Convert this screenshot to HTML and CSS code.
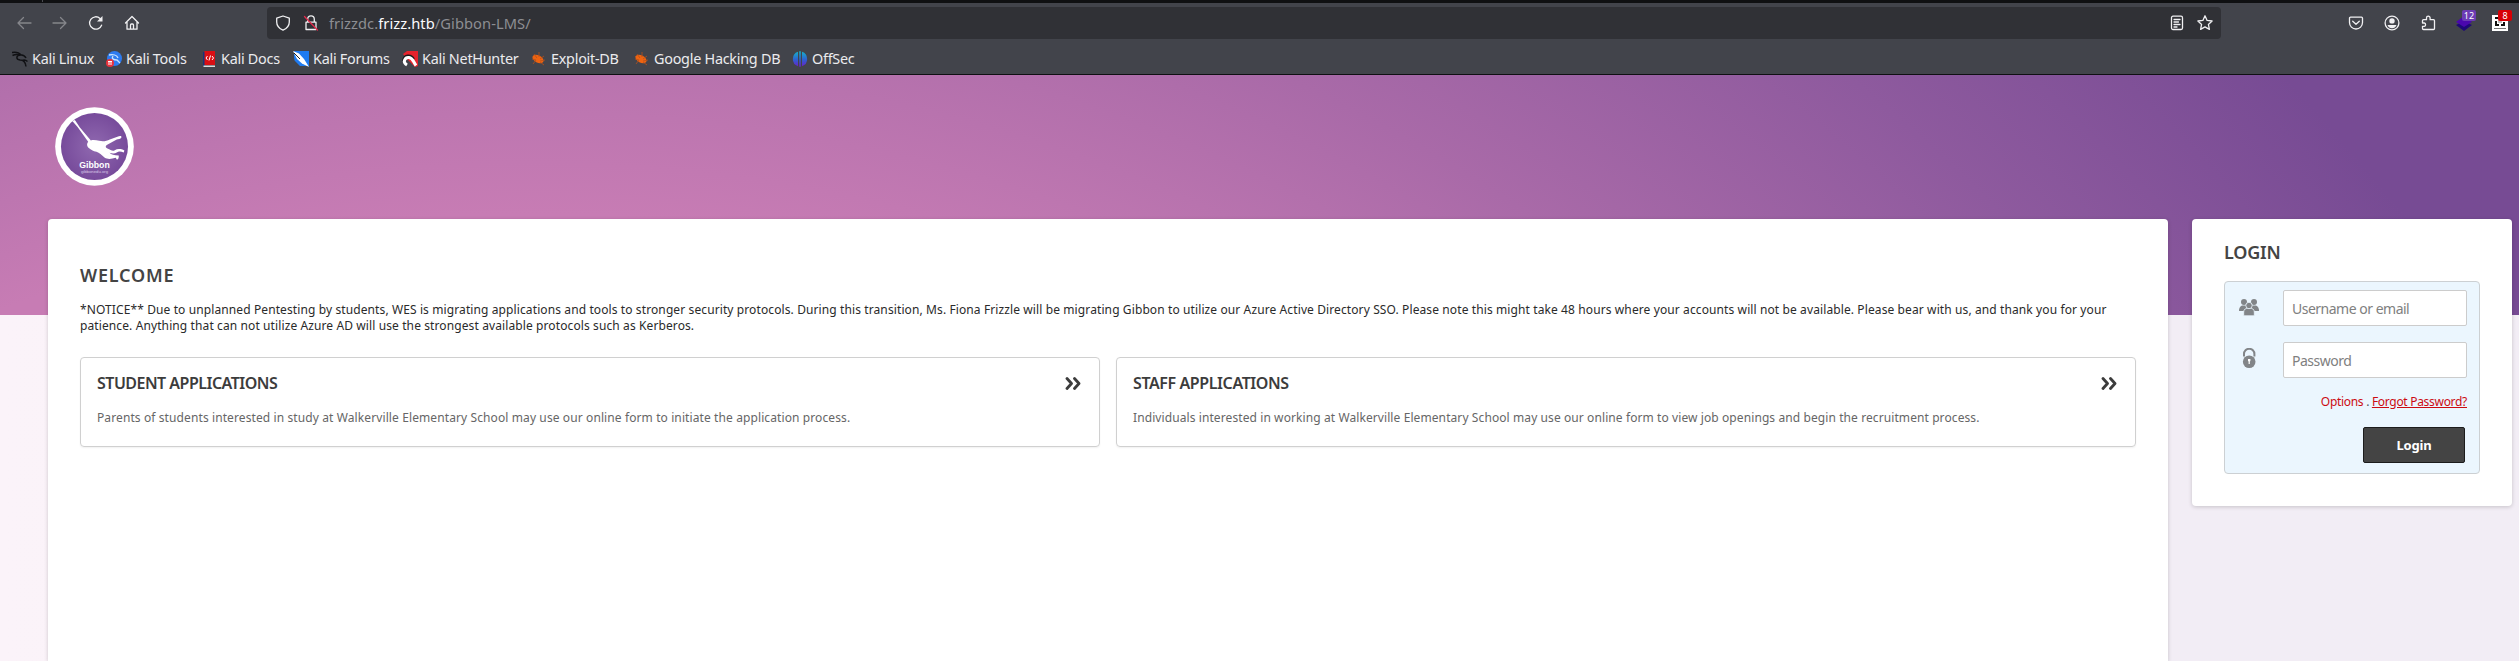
FILE: index.html
```
<!DOCTYPE html>
<html lang="en">
<head>
<meta charset="utf-8">
<title>Gibbon</title>
<link rel="stylesheet" href="styles.css">
</head>
<body>
<div class="tabstrip"><span class="tab-edge"></span></div>
<header class="browser">
  <div class="navbar">
    <svg class="ico dim" viewBox="0 0 16 16"><path d="M15 8H2M7.500 2.500 2 8l5.500 5.500"/></svg>
    <svg class="ico dim" viewBox="0 0 16 16"><path d="M1 8h13M8.500 2.500 14 8l-5.500 5.500"/></svg>
    <svg class="ico" viewBox="0 0 16 16"><path d="M13.600 10.200A6.200 6.200 0 1 1 12 3.400l1.500 1.500"/><path class="fill" d="M14.500 1v5.500H9z"/></svg>
    <svg class="ico" viewBox="0 0 16 16"><path d="M1.500 8 8 1.500 14.500 8M3 7v7.200h10V7M6.500 14V10a1 1 0 0 1 1-1h1a1 1 0 0 1 1 1v4"/></svg>
    <div class="urlbar">
      <svg class="ico" viewBox="0 0 16 16"><path d="M8 1 14.300 3.200V7c0 3.500-2.400 6.500-6.300 8.200C4.100 13.500 1.700 10.500 1.700 7V3.200z"/></svg>
      <svg class="ico" viewBox="0 0 16 16"><path d="M4.700 7V4.200a3.300 3.300 0 0 1 6.600 0V7M3 7.200h10v7.300H3z"/><path class="slash" d="M1.500 1.500 14.500 15"/></svg>
      <div class="url">frizzdc.<b>frizz.htb</b>/Gibbon-LMS/</div>
      <svg class="ico" viewBox="0 0 16 16"><rect x="2.500" y="1.200" width="11" height="13.300" rx="1.500"/><path d="M5 4.500h6M5 7h4.500M5 9.500h6M5 12h3"/></svg>
      <svg class="ico star" viewBox="0 0 16 16"><path d="m8 .8 2.100 4.600 5 .6-3.700 3.400 1 5L8 11.900l-4.400 2.500 1-5L.9 6l5-.6z"/></svg>
    </div>
    <svg class="ico" viewBox="0 0 16 16"><path d="M1.500 3.200a1 1 0 0 1 1-1h11a1 1 0 0 1 1 1V7.500a6.500 6.500 0 0 1-13 0zM4.700 6.300 8 9.300l3.300-3"/></svg>
    <svg class="ico" viewBox="0 0 16 16"><circle cx="8" cy="8" r="6.900"/><circle class="fill" cx="8" cy="5.900" r="2.700"/><path class="fill" d="M3.500 10h9c-.8 2.200-2.500 3.300-4.500 3.300S4.300 12.200 3.500 10z"/></svg>
    <svg class="ico" viewBox="0 0 16 16"><path d="M2.500 8V5.700a1 1 0 0 1 1-1h3V3a1.800 1.800 0 0 1 3.600 0v1.700h3.400a1 1 0 0 1 1 1v7.800a1 1 0 0 1-1 1h-10a1 1 0 0 1-1-1v-2.200h1.800a1.700 1.700 0 0 0 0-3.300z"/></svg>
    <span class="ext">
      <svg class="art" viewBox="0 0 16 16"><path fill="#1e0878" d="m0 10 8-4 8 4-8 6z"/><path fill="#4a07ae" d="m0 7 8-6 8 6-8 5z"/></svg>
      <span class="badge violet">12</span>
    </span>
    <span class="ext">
      <svg class="art" viewBox="0 0 16 16"><path fill="#fff" d="M0 0h16v16H0z"/><path fill="#111" d="M3 2h3v2H3zM3 6h2v3h2v2H3zM11 7h2v4H9V9h2z"/><path fill="#bbb" d="M6 5h4v3H6z"/><path fill="#777" d="M2 13h12v1H2z"/></svg>
      <span class="badge red">8</span>
    </span>
  </div>
  <nav class="bookmarks">
    <a><svg class="art" viewBox="0 0 16 16"><path fill="none" stroke="#101114" stroke-width="1.500" d="M0 1.500c3-.5 7 0 9 2.500M.5 4.500c3-1.500 6-1 8-.5C3.500 4.500 4 8.500 8 9c4 0 5.500 2 6 6.500M8.500 4c3-.5 4.500 1 5.500 3M10 9.500c2-1 4-.5 5.500 1"/></svg>Kali Linux</a>
    <a><svg class="art" viewBox="0 0 16 16"><circle cx="8.500" cy="7.500" r="7.500" fill="#2d7bf0"/><path fill="none" stroke="#c7e2ff" stroke-width="1.300" d="M3 4c4-1 8 0 9 3M7 5c-2 3 1 4 4 4l3 3"/><circle cx="4" cy="12" r="4" fill="#e8323c"/><path stroke="#fff" fill="none" d="M2 10.500h4M3 10.500v3.500M5 10.500v3.500"/></svg>Kali Tools</a>
    <a><svg class="art" viewBox="0 0 16 16"><path fill="#14367c" d="M2 1h2v14H2z"/><path fill="#d90f14" d="M3.500 0H14v14H3.500z"/><path fill="#ddd" d="M2.500 14.500H14V16H2.500z"/><path fill="none" stroke="#fff" d="M6.500 5 5 7l1.500 2M11 5l1.500 2L11 9M9.500 4.500l-1.500 5"/></svg>Kali Docs</a>
    <a><svg class="art" viewBox="0 0 16 16"><path fill="#1f7bf0" d="M1 0h15v15H1z"/><path fill="#42444b" d="M0 2 3 16H0zM2 16 1 9l7 7z"/><path fill="#fff" d="m0 0 6 2.500L11 8l5 8-7-3.500L4 8z"/><path stroke="#222" d="m1 2 6 6"/></svg>Kali Forums</a>
    <a><svg class="art" viewBox="0 0 16 16"><path fill="#e6232c" d="M1 3 5 0h11v15l-3 1L5 8z"/><path fill="none" stroke="#191919" stroke-width="2" d="M1 10c1-7 8-7 11-2"/><path fill="none" stroke="#fff" stroke-width="3" d="M5 14C0 11 3 6 7 6.500c4 .5 4 4 7 8"/></svg>Kali NetHunter</a>
    <a><svg class="art" viewBox="0 0 16 16"><ellipse cx="7" cy="8" rx="6" ry="3.600" transform="rotate(28 7 8)" fill="#ee6310"/><path stroke="#b4501c" stroke-width=".8" fill="none" d="m1 8 4 1-3 4M3 3l3 4M8 1v5M13 5l-4 3M14 9l-5 1M13 14l-4-3"/></svg>Exploit-DB</a>
    <a><svg class="art" viewBox="0 0 16 16"><ellipse cx="7" cy="8" rx="6" ry="3.600" transform="rotate(28 7 8)" fill="#ee6310"/><path stroke="#b4501c" stroke-width=".8" fill="none" d="m1 8 4 1-3 4M3 3l3 4M8 1v5M13 5l-4 3M14 9l-5 1M13 14l-4-3"/></svg>Google Hacking DB</a>
    <a><svg class="art" viewBox="0 0 16 16"><defs><linearGradient id="os" x2="0" y2="1"><stop stop-color="#14b4c8"/><stop offset=".55" stop-color="#2f5fd0"/><stop offset="1" stop-color="#6a1fc8"/></linearGradient></defs><path fill="url(#os)" d="M6 .8v14.400A7.600 7.600 0 0 1 6 .8zM10 .8v14.400A7.600 7.600 0 0 0 10 .8zM7.200.3h1.600v15.400H7.200z"/></svg>OffSec</a>
  </nav>
</header>
<main class="page">
  <svg class="logo" viewBox="0 0 238 238">
    <defs><radialGradient id="lg"><stop stop-color="#9069b0"/><stop offset="1" stop-color="#774b9b"/></radialGradient></defs>
    <circle cx="119" cy="119" r="118.500" fill="#fff"/><circle cx="119" cy="119" r="101" fill="url(#lg)"/>
    <path fill="#fff" d="M52 42 60 39 75 62 108 101C115 98 125 100 133 102 145 105 155 103 165 98L188 90C195 86 202 87 200 92 198 97 190 97 186 98L160 112C152 116 150 121 158 125 168 130 174 134 180 130 188 125 200 126 209 131L207 137C198 134 192 133 186 137 180 141 172 140 164 138 170 144 178 146 192 146 193 152 190 160 186 158L183 153C170 157 158 158 150 153 140 145 134 138 125 135 115 133 108 128 100 122 95 116 96 110 100 105L68 60z"/>
    <text class="logo-name" x="73" y="185" textLength="92" lengthAdjust="spacingAndGlyphs">Gibbon</text>
    <text class="logo-site" x="78" y="199" textLength="82" lengthAdjust="spacingAndGlyphs">gibbonedu.org</text>
  </svg>
  <div class="columns">
    <section class="card content">
      <h2 class="welcome">WELCOME</h2>
      <p class="notice">*NOTICE** Due to unplanned Pentesting by students, WES is migrating applications and tools to stronger security protocols. During this transition, Ms. Fiona Frizzle will be migrating Gibbon to utilize our Azure Active Directory SSO. Please note this might take 48 hours where your accounts will not be available. Please bear with us, and thank you for your patience. Anything that can not utilize Azure AD will use the strongest available protocols such as Kerberos.</p>
      <div class="apps">
        <a class="app">
          <div class="app-head"><h3>STUDENT APPLICATIONS</h3><svg class="chev" viewBox="0 0 17 13"><path d="m2 1.500 4.500 5L2 11.500M9.500 1.500l4.500 5-4.500 5"/></svg></div>
          <p>Parents of students interested in study at Walkerville Elementary School may use our online form to initiate the application process.</p>
        </a>
        <a class="app">
          <div class="app-head"><h3 class="staff">STAFF APPLICATIONS</h3><svg class="chev" viewBox="0 0 17 13"><path d="m2 1.500 4.500 5L2 11.500M9.500 1.500l4.500 5-4.500 5"/></svg></div>
          <p class="snug">Individuals interested in working at Walkerville Elementary School may use our online form to view job openings and begin the recruitment process.</p>
        </a>
      </div>
    </section>
    <aside class="card login">
      <h2>LOGIN</h2>
      <form class="panel">
        <div class="field">
          <svg class="users" viewBox="0 0 20 17"><g fill="#828588"><circle cx="5" cy="3" r="3"/><circle cx="15" cy="3" r="3"/><path d="M0 12c0-4 2-5.500 4-5.500h12c2 0 4 1.500 4 5.500z"/></g><g fill="#828588" stroke="#ebf6fe" stroke-width=".8"><path d="M4.700 16.800V13c0-3 2-3.800 5.300-3.800s5.300.8 5.300 3.800v3.800z"/><circle cx="10" cy="6.500" r="3.200"/></g></svg>
          <input type="text" placeholder="Username or email">
        </div>
        <div class="field">
          <svg class="padlock" viewBox="0 0 20 20"><path fill="none" stroke="#828588" stroke-width="2" d="M5 8.500V6a5.200 5.200 0 0 1 10.400 0v2.500"/><circle cx="10.200" cy="13.700" r="6.300" fill="#828588"/><path fill="#fff" d="M9 11h2.400v2l-.6.500V16H9.600v-2.500L9 13z"/></svg>
          <input type="password" placeholder="Password">
        </div>
        <div class="links"><a>Options</a> . <a class="forgot">Forgot Password?</a></div>
        <button type="button">Login</button>
      </form>
    </aside>
  </div>
</main>
</body>
</html>
```
FILE: styles.css
```
* { box-sizing: border-box; }
html, body { height: 100%; }
body {
  margin: 0;
  display: flex;
  flex-direction: column;
  overflow: hidden;
  font-family: "Noto Sans", sans-serif;
  color: #2a2a2a;
}
h2, h3, p { margin: 0; }
svg { flex: none; display: block; }

.tabstrip { height: 3px; background: #0f1012; padding-left: 42px; flex: none; }
.tab-edge { display: block; width: 1px; height: 2px; background: #4a4b50; }

.browser { height: 72px; flex: none; background: #42444b; border-bottom: 1px solid #0f1012; }
.navbar { display: flex; align-items: center; gap: 20px; padding: 4px 11px 0 16px; height: 36px; }
.ico { width: 16px; height: 16px; fill: none; stroke: #f0f0f2; stroke-width: 1.3; stroke-linejoin: round; stroke-linecap: round; }
.ico .fill { fill: #f0f0f2; stroke: none; }
.ico .slash { stroke: #e2284a; }
.dim { stroke: #85868b; }
.art { width: 16px; height: 16px; }
.urlbar {
  display: flex;
  align-items: center;
  gap: 12px;
  width: 1954px;
  height: 32px;
  margin: 0 107px;
  padding: 0 8px;
  border-radius: 4px;
  background: #303136;
}
.url { flex: 1; margin-left: -2px; font-size: 14.67px; letter-spacing: .07px; color: #8d8e93; }
.url b { font-weight: 400; color: #fbfbfe; }
.ext { position: relative; flex: none; }
.badge {
  position: absolute;
  left: 6px;
  top: -5px;
  width: 14px;
  height: 11px;
  border-radius: 2px;
  color: #fff;
  font-size: 9px;
  line-height: 11px;
  text-align: center;
}
.violet { background: #6c3cb4; }
.red { background: #d70005; }
.bookmarks {
  display: grid;
  grid-template-columns: 94px 95px 92px 109px 129px 103px 158px auto;
  height: 35px;
  padding: 4px 0 0 12px;
  font-size: 14.4px;
  letter-spacing: -.26px;
  color: #ebebee;
}
.bookmarks a { display: flex; align-items: center; gap: 4px; white-space: nowrap; }

.page {
  flex: 1;
  min-height: 0;
  display: flex;
  flex-direction: column;
  padding: 32px 7px 0 48px;
  background:
    radial-gradient(circle 2398px at 530px 1635px, #c77cb4 62.4%, #a96aa8 75%, #8e5a9e 87.500%, #774b94 100%) 0 0 / 100% 240px no-repeat,
    linear-gradient(90deg, #fbf3f9, #f2edf5 85%);
}
.logo { width: 79px; height: 79px; margin: 0 0 33px 7px; }
.logo-name { font: 700 27px "Liberation Sans", sans-serif; fill: #fff; }
.logo-site { font: 13px "Liberation Sans", sans-serif; fill: #d9c9e6; }
.columns { flex: 1; display: grid; grid-template-columns: 2120px 320px; gap: 24px; align-items: start; }
.card { background: #fff; border-radius: 4px; box-shadow: 0 1px 4px rgba(0, 0, 0, .18); }
.content { height: 442px; padding: 44px 32px; border-radius: 4px 4px 0 0; }
h2 { font-size: 18px; line-height: 24px; font-weight: 600; color: #444; }
.welcome { letter-spacing: .8px; }
.notice { margin-top: 15px; font-size: 12px; line-height: 16px; letter-spacing: .107px; }
.apps { display: grid; grid-template-columns: 1fr 1fr; gap: 16px; margin-top: 23px; }
.app { height: 90px; padding: 13px 16px; border: 1px solid #d0d0d0; border-radius: 4px; box-shadow: 0 1px 2px rgba(0, 0, 0, .06); }
.app-head { display: flex; justify-content: space-between; align-items: center; }
h3 { font-size: 16px; line-height: 24px; font-weight: 600; letter-spacing: -.51px; color: #3c3c3c; }
.staff { letter-spacing: -.4px; }
.chev { width: 17px; height: 13px; margin-right: 1px; fill: none; stroke: #3c3c3c; stroke-width: 2.800; stroke-linecap: round; stroke-linejoin: round; }
.app p { margin-top: 15px; font-size: 12px; line-height: 16px; letter-spacing: .105px; color: #666; }
.app .snug { letter-spacing: .092px; }

.login { height: 287px; padding: 21px 32px; }
.login h2 { letter-spacing: -.2px; }
.panel { height: 193px; margin-top: 17px; padding: 8px 12px 0 14px; border: 1px solid #ccd0d3; border-radius: 4px; background: #ebf6fe; display: flex; flex-direction: column; }
.field { display: flex; justify-content: space-between; margin-bottom: 16px; }
.users { width: 20px; height: 17px; margin-top: 9px; }
.padlock { width: 20px; height: 20px; margin-top: 6px; }
input {
  width: 184px;
  height: 36px;
  padding: 0 8px;
  border: 1px solid #ccc;
  border-radius: 2px;
  background: #fff;
  font: 14px "Noto Sans", sans-serif;
  letter-spacing: -.5px;
}
input::placeholder { color: #808080; opacity: 1; }
.links { font-size: 12px; line-height: 16px; letter-spacing: -.3px; text-align: right; color: #555; }
.links a { color: #cc0b12; }
.links .forgot { text-decoration: underline; }
button {
  width: 102px;
  height: 36px;
  margin: 17px 2px 0 auto;
  border: 1px solid #1c1c1c;
  border-radius: 2px;
  background: #444;
  color: #fff;
  font: 700 13px "Noto Sans", sans-serif;
  letter-spacing: -.2px;
}
```
